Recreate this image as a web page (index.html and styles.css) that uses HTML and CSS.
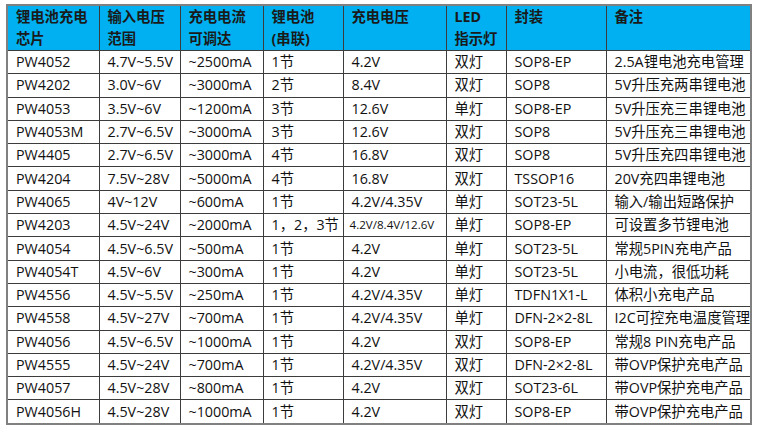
FILE: index.html
```html
<!DOCTYPE html>
<html lang="zh-CN">
<head>
<meta charset="utf-8">
<title>锂电池充电芯片</title>
<link rel="stylesheet" href="styles.css">
</head>
<body>
<table class="chips">
  <colgroup>
    <col class="c1"><col class="c2"><col class="c3"><col class="c4"><col class="c5"><col class="c6"><col class="c7"><col class="c8">
  </colgroup>
  <thead>
    <tr class="head">
      <th>锂电池充电<br>芯片</th>
      <th>输入电压<br>范围</th>
      <th>充电电流<br>可调达</th>
      <th>锂电池<br>(串联)</th>
      <th>充电电压</th>
      <th>LED<br>指示灯</th>
      <th>封装</th>
      <th>备注</th>
    </tr>
  </thead>
  <tbody>
    <tr><td>PW4052</td><td>4.7V~5.5V</td><td>~2500mA</td><td>1节</td><td>4.2V</td><td>双灯</td><td>SOP8-EP</td><td>2.5A锂电池充电管理</td></tr>
    <tr><td>PW4202</td><td>3.0V~6V</td><td>~3000mA</td><td>2节</td><td>8.4V</td><td>双灯</td><td>SOP8</td><td>5V升压充两串锂电池</td></tr>
    <tr><td>PW4053</td><td>3.5V~6V</td><td>~1200mA</td><td>3节</td><td>12.6V</td><td>单灯</td><td>SOP8-EP</td><td>5V升压充三串锂电池</td></tr>
    <tr><td>PW4053M</td><td>2.7V~6.5V</td><td>~3000mA</td><td>3节</td><td>12.6V</td><td>双灯</td><td>SOP8</td><td>5V升压充三串锂电池</td></tr>
    <tr><td>PW4405</td><td>2.7V~6.5V</td><td>~3000mA</td><td>4节</td><td>16.8V</td><td>双灯</td><td>SOP8</td><td>5V升压充四串锂电池</td></tr>
    <tr><td>PW4204</td><td>7.5V~28V</td><td>~5000mA</td><td>4节</td><td>16.8V</td><td>双灯</td><td>TSSOP16</td><td>20V充四串锂电池</td></tr>
    <tr><td>PW4065</td><td>4V~12V</td><td>~600mA</td><td>1节</td><td>4.2V/4.35V</td><td>单灯</td><td>SOT23-5L</td><td>输入/输出短路保护</td></tr>
    <tr><td>PW4203</td><td>4.5V~24V</td><td>~2000mA</td><td>1，2，3节</td><td class="small">4.2V/8.4V/12.6V</td><td>单灯</td><td>SOP8-EP</td><td>可设置多节锂电池</td></tr>
    <tr><td>PW4054</td><td>4.5V~6.5V</td><td>~500mA</td><td>1节</td><td>4.2V</td><td>单灯</td><td>SOT23-5L</td><td>常规5PIN充电产品</td></tr>
    <tr><td>PW4054T</td><td>4.5V~6V</td><td>~300mA</td><td>1节</td><td>4.2V</td><td>单灯</td><td>SOT23-5L</td><td>小电流，很低功耗</td></tr>
    <tr><td>PW4556</td><td>4.5V~5.5V</td><td>~250mA</td><td>1节</td><td>4.2V/4.35V</td><td>单灯</td><td>TDFN1X1-L</td><td>体积小充电产品</td></tr>
    <tr><td>PW4558</td><td>4.5V~27V</td><td>~700mA</td><td>1节</td><td>4.2V/4.35V</td><td>单灯</td><td>DFN-2×2-8L</td><td>I2C可控充电温度管理</td></tr>
    <tr><td>PW4056</td><td>4.5V~6.5V</td><td>~1000mA</td><td>1节</td><td>4.2V</td><td>双灯</td><td>SOP8-EP</td><td>常规8 PIN充电产品</td></tr>
    <tr><td>PW4555</td><td>4.5V~24V</td><td>~700mA</td><td>1节</td><td>4.2V/4.35V</td><td>双灯</td><td>DFN-2×2-8L</td><td>带OVP保护充电产品</td></tr>
    <tr><td>PW4057</td><td>4.5V~28V</td><td>~800mA</td><td>1节</td><td>4.2V</td><td>双灯</td><td>SOT23-6L</td><td>带OVP保护充电产品</td></tr>
    <tr><td>PW4056H</td><td>4.5V~28V</td><td>~1000mA</td><td>1节</td><td>4.2V</td><td>双灯</td><td>SOP8-EP</td><td>带OVP保护充电产品</td></tr>
  </tbody>
</table>
</body>
</html>
```
FILE: styles.css
```css
html, body {
  margin: 0;
  padding: 0;
  background: #ffffff;
}
body {
  padding: 4px 0 0 6px;
  font-family: "Open Sans", "Noto Sans CJK SC", sans-serif;
  font-size: 14.3px;
  color: #111111;
}
.chips {
  border-collapse: collapse;
  table-layout: fixed;
  width: 744px;
  border: 2px solid #808080;
}
.c1 { width: 92px; }
.c2 { width: 81px; }
.c3 { width: 83px; }
.c4 { width: 80px; }
.c5 { width: 103px; }
.c6 { width: 60px; }
.c7 { width: 100px; }
.c8 { width: 145px; }
.chips th,
.chips td {
  border: 1px solid #3c3c3c;
  padding: 0 0 0 8px;
  text-align: left;
  white-space: nowrap;
}
.chips th {
  background: #00b0f0;
  font-family: "Noto Sans", "Noto Sans CJK SC", sans-serif;
  font-weight: 700;
  color: #1a1a1a;
  vertical-align: top;
  line-height: 22px;
  height: 44px;
}
.chips td {
  height: 22.3px;
  line-height: 20px;
  vertical-align: middle;
}
.chips td.small {
  font-size: 11.6px;
  padding-left: 6px;
}
```
